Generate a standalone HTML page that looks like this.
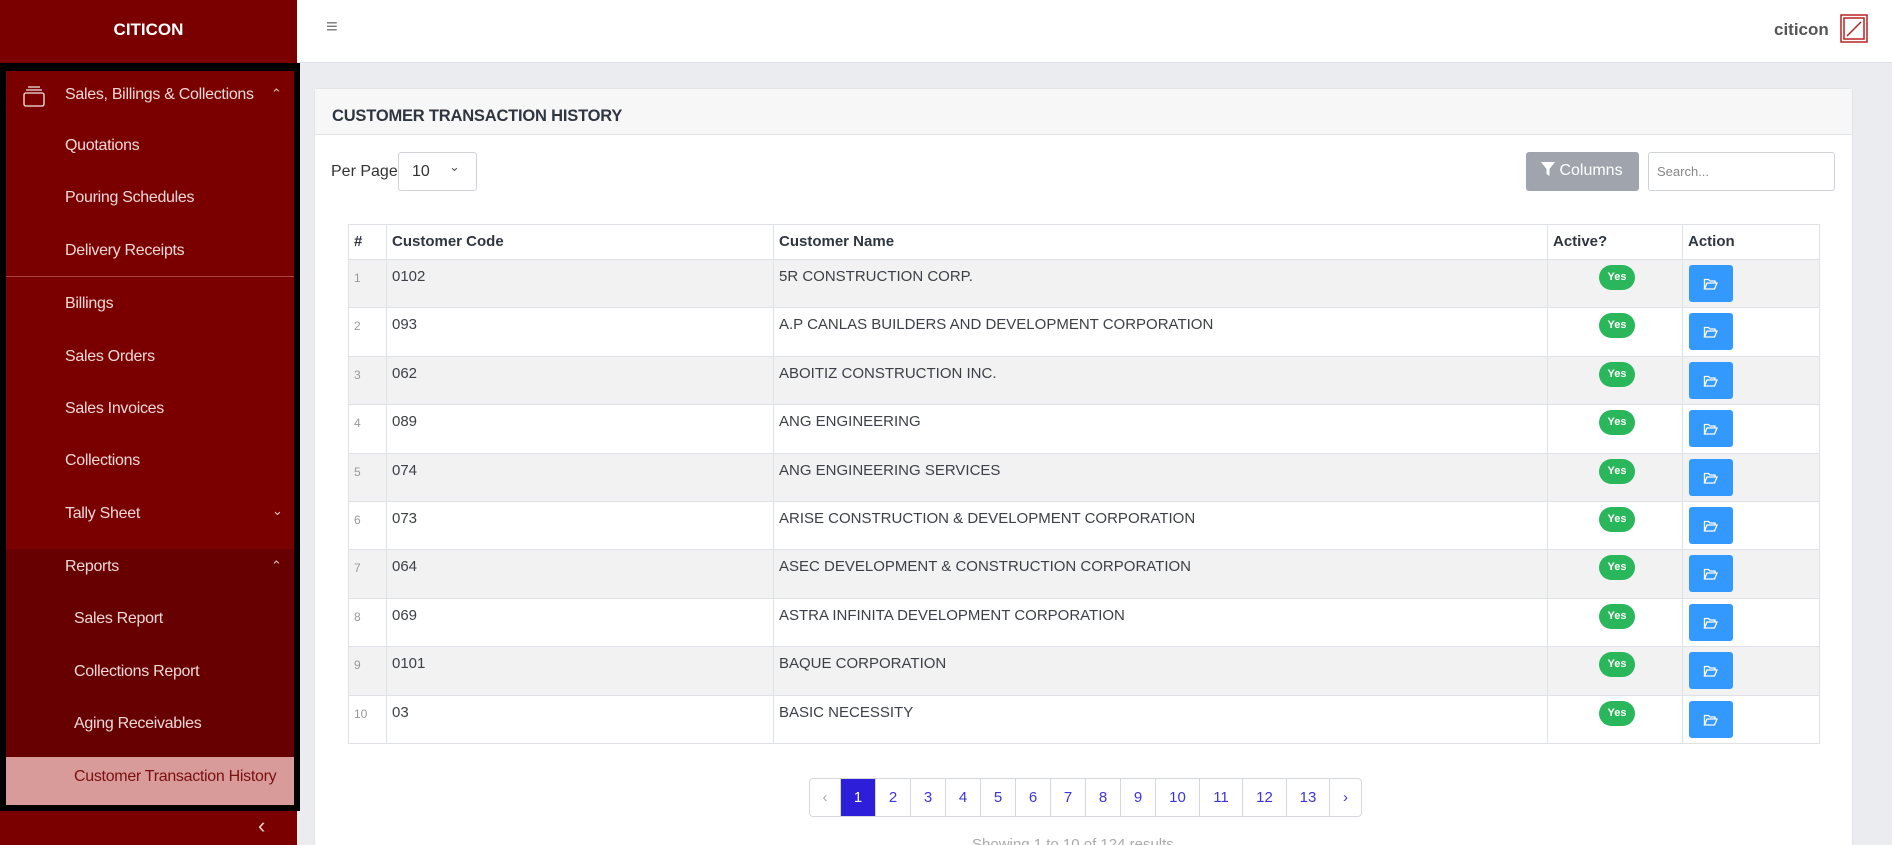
<!DOCTYPE html>
<html style="overflow:hidden;width:1892px;height:845px"><head><meta charset="utf-8"><style>
*{box-sizing:border-box;margin:0;padding:0}
body{width:1892px;height:845px;overflow:hidden;font-family:"Liberation Sans",sans-serif;background:#ebecef;position:relative;color:#333}
.abs{position:absolute}
#side{left:0;top:0;width:297px;height:845px;background:#7a0000}
#brand{left:0;top:0;width:297px;height:63px;color:#fff;font-weight:bold;font-size:17px;text-align:center;line-height:60px}
#frame{left:0;top:63px;width:300px;height:748px;border:6px solid #000;border-top-width:8px;background:#7a0000;overflow:hidden}
.mi{position:absolute;left:59px;color:#f0d8d8;font-size:16px;letter-spacing:-0.3px}
#rep{left:0;top:478px;width:288px;height:270px;background:#670000}
#sel{left:0;top:686px;width:288px;height:48px;background:#d99a9a}
#top{left:297px;top:0;width:1595px;height:63px;background:#fff;border-bottom:1px solid #dde0e4}
#card{left:314px;top:88px;width:1539px;height:757px;background:#fff;border:1px solid #e2e4e8;border-bottom:none;border-radius:4px 4px 0 0}
#ch{left:0;top:0;width:100%;height:46px;background:#f7f7f7;border-bottom:1px solid #e2e4e8;font-weight:bold;font-size:16.5px;color:#2f3640;padding:18px 0 0 17px;letter-spacing:-0.2px}
table{position:absolute;left:348px;top:224px;width:1472px;border-collapse:collapse;font-size:15px;color:#3c4048}
td,th{border:1px solid #dee1e5;text-align:left;vertical-align:top;padding:0 0 0 5px}
th{height:35px;font-weight:bold;padding-top:8px;color:#2f3640}
td{height:48.4px;padding-top:8px}
tr:nth-child(even) td{background:#f2f2f2}
td.n{color:#999;font-size:12px;padding-top:11px}
.yes{display:block;margin:-3px 0 0 46px;width:36px;height:25px;border-radius:13px;background:#2ab65a;color:#fff;font-size:11px;font-weight:bold;text-align:center;line-height:25px}
.btn{display:block;margin:-3px 0 0 1px;width:44px;height:37px;border-radius:3px;background:#3399ff;position:relative}
#pg{left:809px;top:778px;height:39px;display:flex;border:1px solid #d4d7dc;border-radius:4px;background:#fff;overflow:hidden}
#pg div{border-right:1px solid #d4d7dc;color:#3d35d6;font-size:15px;text-align:center;line-height:37px}
</style></head><body>
<div id="side" class="abs">
<div id="brand" class="abs">CITICON</div>
<div id="frame" class="abs">
<div id="rep" class="abs"></div>
<div id="sel" class="abs"></div>
<svg class="abs" style="left:16px;top:14px" width="24" height="24" viewBox="0 0 24 24" fill="none" stroke="#e0c0c0" stroke-width="1.6"><rect x="2" y="8" width="20" height="13" rx="2"/><path d="M4 5h16M6 2h12"/></svg>
<div class="mi" style="top:15px;left:59px">Sales, Billings &amp; Collections</div>
<div class="abs" style="left:265px;top:15px;color:#e0c0c0;font-size:13px">&#8963;</div>
<div class="mi" style="top:66px">Quotations</div>
<div class="mi" style="top:118px">Pouring Schedules</div>
<div class="mi" style="top:171px">Delivery Receipts</div>
<div class="abs" style="left:0;top:205px;width:288px;height:1px;background:#a44"></div>
<div class="mi" style="top:224px">Billings</div>
<div class="mi" style="top:277px">Sales Orders</div>
<div class="mi" style="top:329px">Sales Invoices</div>
<div class="mi" style="top:381px">Collections</div>
<div class="mi" style="top:434px">Tally Sheet</div>
<div class="abs" style="left:266px;top:432px;color:#e0c0c0;font-size:13px">&#8964;</div>
<div class="mi" style="top:487px">Reports</div>
<div class="abs" style="left:265px;top:487px;color:#e0c0c0;font-size:13px">&#8963;</div>
<div class="mi" style="top:539px;left:68px">Sales Report</div>
<div class="mi" style="top:592px;left:68px">Collections Report</div>
<div class="mi" style="top:644px;left:68px">Aging Receivables</div>
<div class="mi" style="top:697px;left:68px;color:#7a1010">Customer Transaction History</div>
</div>
<div class="abs" style="left:258px;top:813px;color:#f0d0d0;font-size:22px">&#8249;</div>
</div>
<div id="top" class="abs">
<div class="abs" style="left:29px;top:16px;color:#777;font-size:20px">&#8801;</div>
<div class="abs" style="left:1477px;top:20px;color:#555;font-weight:bold;font-size:17px">citicon</div>
<svg class="abs" style="left:1543px;top:14px" width="28" height="29" viewBox="0 0 28 29" fill="none" stroke="#b22" stroke-width="1.5"><rect x="1" y="1" width="26" height="27"/><rect x="4" y="4" width="20" height="21"/><path d="M7 22L21 8"/></svg>
</div>
<div id="card" class="abs"><div id="ch" class="abs">CUSTOMER TRANSACTION HISTORY</div></div>
<div class="abs" style="left:331px;top:163px;font-size:16px;color:#333">Per Page</div>
<div class="abs" style="left:398px;top:152px;width:79px;height:39px;border:1px solid #cfd3d8;border-radius:3px;background:#fff;font-size:16px;padding:10px 0 0 13px">10<span style="position:absolute;left:50px;top:6px;font-size:13px;color:#555">&#8964;</span></div>
<div class="abs" style="left:1526px;top:152px;width:113px;height:39px;border-radius:3px;background:#a0a5ad;color:#fff;font-size:16px;padding:10px 0 0 15px"><svg width="14" height="14" viewBox="0 0 14 14" style="vertical-align:-1px"><path d="M0 0h14L8.5 7v7L5.5 12V7z" fill="#fff"/></svg> Columns</div>
<div class="abs" style="left:1648px;top:152px;width:187px;height:39px;border:1px solid #cfd3d8;border-radius:3px;background:#fff;font-size:13px;color:#888;padding:11px 0 0 8px">Search...</div>
<table>
<tr><th style="width:38px">#</th><th style="width:387px">Customer Code</th><th style="width:774px">Customer Name</th><th style="width:135px">Active?</th><th>Action</th></tr>
<tr><td class="n">1</td><td>0102</td><td>5R CONSTRUCTION CORP.</td><td><span class="yes">Yes</span></td><td><span class="btn"></span></td></tr>
<tr><td class="n">2</td><td>093</td><td>A.P CANLAS BUILDERS AND DEVELOPMENT CORPORATION</td><td><span class="yes">Yes</span></td><td><span class="btn"></span></td></tr>
<tr><td class="n">3</td><td>062</td><td>ABOITIZ CONSTRUCTION INC.</td><td><span class="yes">Yes</span></td><td><span class="btn"></span></td></tr>
<tr><td class="n">4</td><td>089</td><td>ANG ENGINEERING</td><td><span class="yes">Yes</span></td><td><span class="btn"></span></td></tr>
<tr><td class="n">5</td><td>074</td><td>ANG ENGINEERING SERVICES</td><td><span class="yes">Yes</span></td><td><span class="btn"></span></td></tr>
<tr><td class="n">6</td><td>073</td><td>ARISE CONSTRUCTION &amp; DEVELOPMENT CORPORATION</td><td><span class="yes">Yes</span></td><td><span class="btn"></span></td></tr>
<tr><td class="n">7</td><td>064</td><td>ASEC DEVELOPMENT &amp; CONSTRUCTION CORPORATION</td><td><span class="yes">Yes</span></td><td><span class="btn"></span></td></tr>
<tr><td class="n">8</td><td>069</td><td>ASTRA INFINITA DEVELOPMENT CORPORATION</td><td><span class="yes">Yes</span></td><td><span class="btn"></span></td></tr>
<tr><td class="n">9</td><td>0101</td><td>BAQUE CORPORATION</td><td><span class="yes">Yes</span></td><td><span class="btn"></span></td></tr>
<tr><td class="n">10</td><td>03</td><td>BASIC NECESSITY</td><td><span class="yes">Yes</span></td><td><span class="btn"></span></td></tr>
</table>
<svg width="0" height="0" style="position:absolute"><defs><g id="fo"><path d="M1.5 12V2.5h4l1.5 1.5h5v2" fill="none" stroke="#fff" stroke-width="1.3"/><path d="M1.5 12l2.5-6h10l-2.5 6z" fill="none" stroke="#fff" stroke-width="1.3"/></g></defs></svg>
<div id="icons"></div>
<script>
for(let i=0;i<10;i++){document.getElementById('icons').insertAdjacentHTML('beforeend','<svg class="abs" style="left:1703px;top:'+(277+i*48.4)+'px" width="16" height="14" viewBox="0 0 16 14"><use href="#fo"/></svg>');}
</script>
<div id="pg" class="abs">
<div style="width:31px;color:#aaa">&#8249;</div>
<div style="width:35px;background:#2d1fd9;color:#fff">1</div>
<div style="width:35px">2</div><div style="width:35px">3</div><div style="width:35px">4</div><div style="width:35px">5</div><div style="width:35px">6</div><div style="width:35px">7</div><div style="width:35px">8</div><div style="width:35px">9</div>
<div style="width:44px">10</div><div style="width:43px">11</div><div style="width:44px">12</div><div style="width:43px">13</div>
<div style="width:31px;border-right:none">&#8250;</div>
</div>
<div class="abs" style="left:972px;top:836px;color:#aaa;font-size:15px">Showing 1 to 10 of 124 results</div>
</body></html>
